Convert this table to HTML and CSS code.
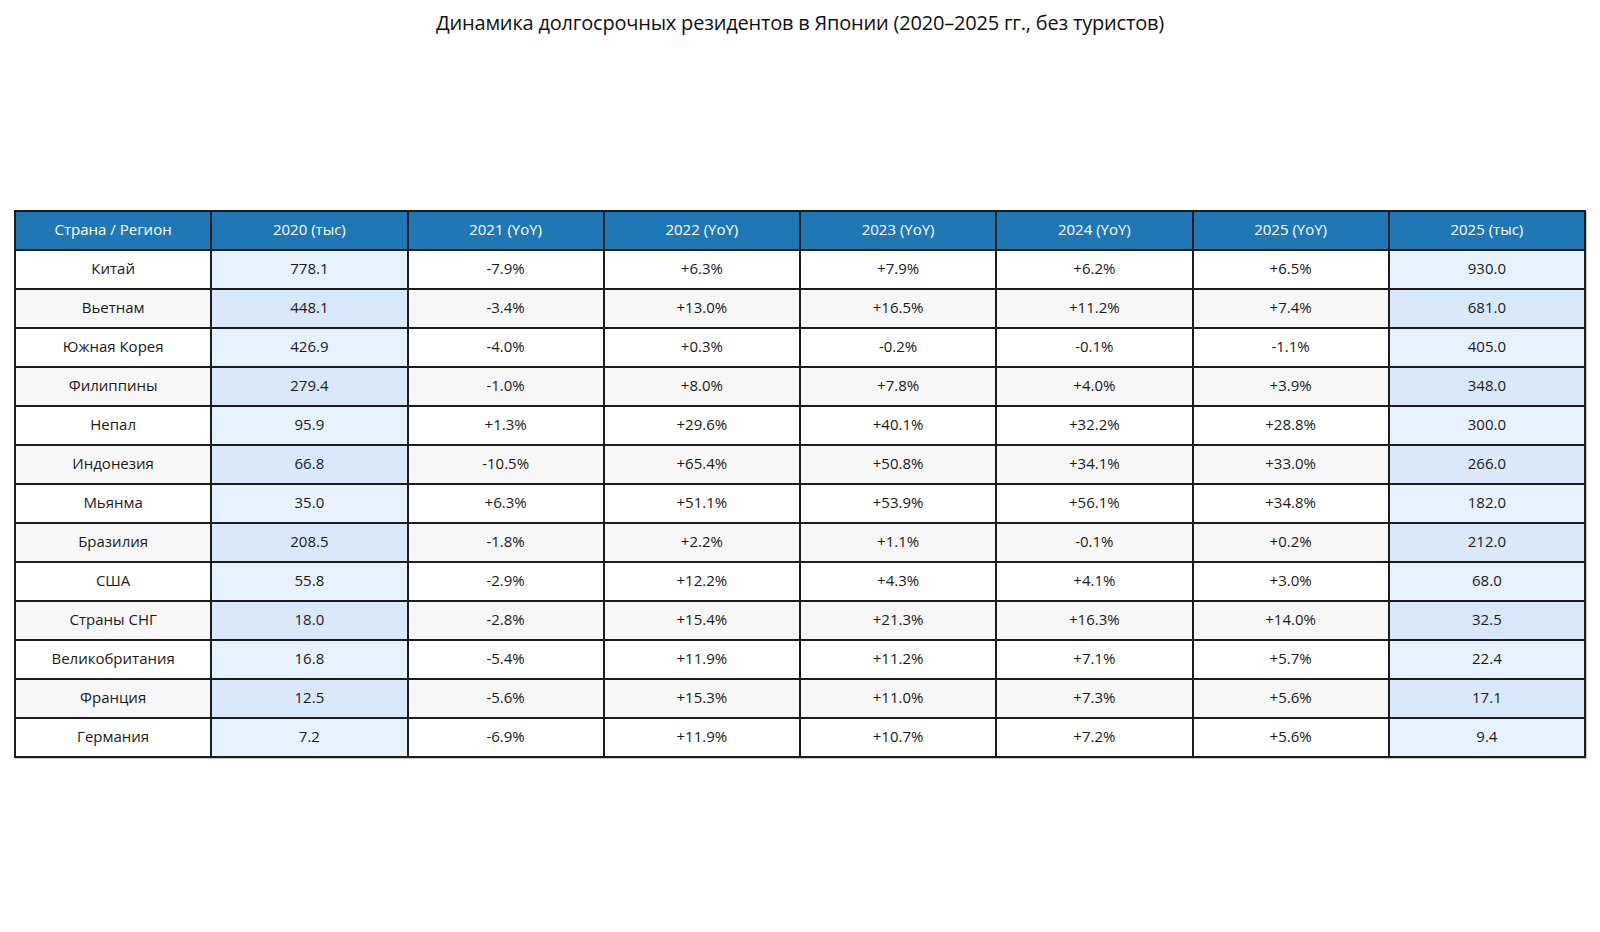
FILE: index.html
```html
<!DOCTYPE html>
<html lang="ru">
<head>
<meta charset="utf-8">
<title>Динамика долгосрочных резидентов в Японии</title>
<link rel="stylesheet" href="styles.css">
</head>
<body>
<div class="page">
  <h1 class="title">Динамика долгосрочных резидентов в Японии (2020–2025 гг., без туристов)</h1>
  <table class="data">
    <thead>
      <tr>
        <th>Страна / Регион</th><th>2020 (тыс)</th><th>2021 (YoY)</th><th>2022 (YoY)</th><th>2023 (YoY)</th><th>2024 (YoY)</th><th>2025 (YoY)</th><th>2025 (тыс)</th>
      </tr>
    </thead>
    <tbody>
      <tr><td>Китай</td><td class="v">778.1</td><td>-7.9%</td><td>+6.3%</td><td>+7.9%</td><td>+6.2%</td><td>+6.5%</td><td class="v">930.0</td></tr>
      <tr><td>Вьетнам</td><td class="v">448.1</td><td>-3.4%</td><td>+13.0%</td><td>+16.5%</td><td>+11.2%</td><td>+7.4%</td><td class="v">681.0</td></tr>
      <tr><td>Южная Корея</td><td class="v">426.9</td><td>-4.0%</td><td>+0.3%</td><td>-0.2%</td><td>-0.1%</td><td>-1.1%</td><td class="v">405.0</td></tr>
      <tr><td>Филиппины</td><td class="v">279.4</td><td>-1.0%</td><td>+8.0%</td><td>+7.8%</td><td>+4.0%</td><td>+3.9%</td><td class="v">348.0</td></tr>
      <tr><td>Непал</td><td class="v">95.9</td><td>+1.3%</td><td>+29.6%</td><td>+40.1%</td><td>+32.2%</td><td>+28.8%</td><td class="v">300.0</td></tr>
      <tr><td>Индонезия</td><td class="v">66.8</td><td>-10.5%</td><td>+65.4%</td><td>+50.8%</td><td>+34.1%</td><td>+33.0%</td><td class="v">266.0</td></tr>
      <tr><td>Мьянма</td><td class="v">35.0</td><td>+6.3%</td><td>+51.1%</td><td>+53.9%</td><td>+56.1%</td><td>+34.8%</td><td class="v">182.0</td></tr>
      <tr><td>Бразилия</td><td class="v">208.5</td><td>-1.8%</td><td>+2.2%</td><td>+1.1%</td><td>-0.1%</td><td>+0.2%</td><td class="v">212.0</td></tr>
      <tr><td>США</td><td class="v">55.8</td><td>-2.9%</td><td>+12.2%</td><td>+4.3%</td><td>+4.1%</td><td>+3.0%</td><td class="v">68.0</td></tr>
      <tr><td>Страны СНГ</td><td class="v">18.0</td><td>-2.8%</td><td>+15.4%</td><td>+21.3%</td><td>+16.3%</td><td>+14.0%</td><td class="v">32.5</td></tr>
      <tr><td>Великобритания</td><td class="v">16.8</td><td>-5.4%</td><td>+11.9%</td><td>+11.2%</td><td>+7.1%</td><td>+5.7%</td><td class="v">22.4</td></tr>
      <tr><td>Франция</td><td class="v">12.5</td><td>-5.6%</td><td>+15.3%</td><td>+11.0%</td><td>+7.3%</td><td>+5.6%</td><td class="v">17.1</td></tr>
      <tr><td>Германия</td><td class="v">7.2</td><td>-6.9%</td><td>+11.9%</td><td>+10.7%</td><td>+7.2%</td><td>+5.6%</td><td class="v">9.4</td></tr>
    </tbody>
  </table>
</div>
</body>
</html>
```
FILE: styles.css
```css
html, body {
  margin: 0;
  padding: 0;
  background: #ffffff;
}
body {
  font-family: "Open Sans", "Roboto", "DejaVu Sans", sans-serif;
  color: #1a1a1a;
}
.page {
  width: 1600px;
  height: 932px;
  padding: 0 14px;
  box-sizing: border-box;
}
.title {
  margin: 0;
  padding-top: 10px;
  height: 210px;
  box-sizing: border-box;
  text-align: center;
  font-weight: 400;
  font-size: 20px;
  line-height: 26px;
  color: #111111;
  letter-spacing: -0.2px;
}
.data {
  width: 1572px;
  table-layout: fixed;
  border-collapse: collapse;
  border: 2px solid #1c1c1c;
  font-size: 15px;
  box-shadow: 1px 1px 0 #c8c8c8;
}
.data th,
.data td {
  border: 2px solid #1c1c1c;
  height: 39px;
  padding: 0 4px 3px;
  text-align: center;
  vertical-align: middle;
  white-space: nowrap;
  box-sizing: border-box;
}
.data th {
  background: #1f77b4;
  color: #ffffff;
  font-weight: 400;
}
.data tbody td {
  background: #ffffff;
  color: #1a1a1a;
}
.data tbody tr:nth-child(even) td {
  background: #f7f7f7;
}
.data tbody td.v {
  background: #e6f2fe;
}
.data tbody tr:nth-child(even) td.v {
  background: #d9e9fb;
}
```
